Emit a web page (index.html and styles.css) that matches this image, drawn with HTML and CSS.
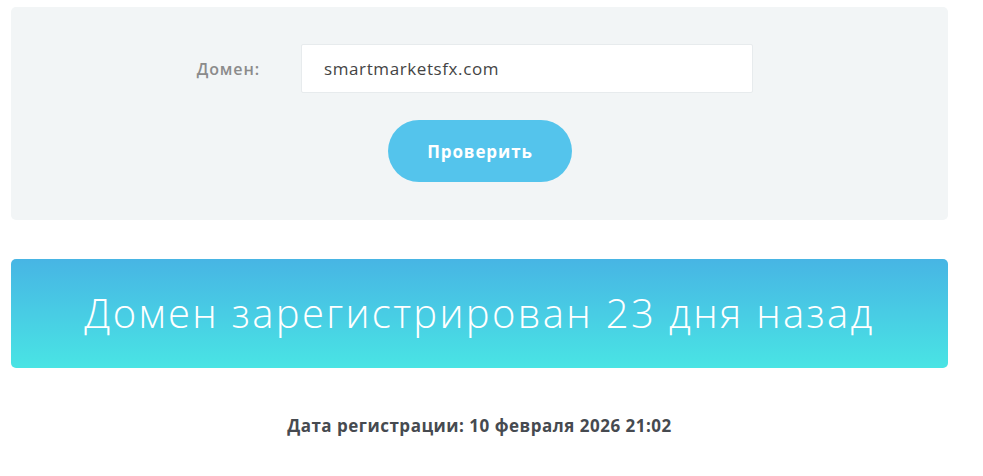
FILE: index.html
```html
<!DOCTYPE html>
<html lang="ru">
<head>
<meta charset="utf-8">
<link rel="stylesheet" href="styles.css">
</head>
<body>
<div class="page">
  <form class="panel">
    <div class="row">
      <label class="label" for="domain">Домен:</label>
      <div class="input" id="domain">smartmarketsfx.com</div>
    </div>
    <div class="actions">
      <button type="button" class="btn">Проверить</button>
    </div>
  </form>
  <div class="banner">Домен зарегистрирован 23 дня назад</div>
  <p class="date">Дата регистрации: 10 февраля 2026 21:02</p>
</div>
</body>
</html>
```
FILE: styles.css
```css
* { box-sizing: border-box; }
html, body { margin: 0; background: #fff; }
body { font-family: "Open Sans", "Noto Sans", sans-serif; color: #444; }
.page { width: 937px; margin-left: 11px; padding-top: 7px; }
.panel {
  background: #f2f5f6;
  border-radius: 5px;
  padding: 37px 0 38px;
  margin: 0;
}
.row {
  display: flex;
  justify-content: flex-end;
  align-items: center;
  padding-right: 195px;
}
.label {
  font-size: 16px;
  font-weight: 600;
  color: #8b8b8b;
  letter-spacing: 0.9px;
  margin-right: 41px;
}
.input {
  width: 452px;
  height: 49px;
  background: #fff;
  border: 1px solid #e7ebed;
  border-radius: 2px;
  padding: 0 22px;
  display: flex;
  align-items: center;
  font-size: 17px;
  font-weight: 500;
  letter-spacing: 0.6px;
  color: #444;
}
.actions {
  display: flex;
  justify-content: center;
  margin-top: 27px;
}
.btn {
  width: 184px;
  height: 62px;
  border: 0;
  border-radius: 31px;
  background: #54c4ec;
  color: #fff;
  font-family: inherit;
  font-size: 17px;
  font-weight: 700;
  letter-spacing: 0.9px;
  padding: 0 0 0 1px;
}
.banner {
  margin-top: 39px;
  height: 109px;
  border-radius: 5px;
  background: linear-gradient(to bottom, #47b5e4, #49e4e4);
  color: #fff;
  font-size: 40px;
  font-weight: 300;
  letter-spacing: 2.35px;
  display: flex;
  align-items: center;
  justify-content: center;
  padding-bottom: 2px;
}
.date {
  margin: 46px 0 0;
  text-align: center;
  font-size: 17px;
  font-weight: 700;
  color: #464a50;
  letter-spacing: 0.5px;
}
```
